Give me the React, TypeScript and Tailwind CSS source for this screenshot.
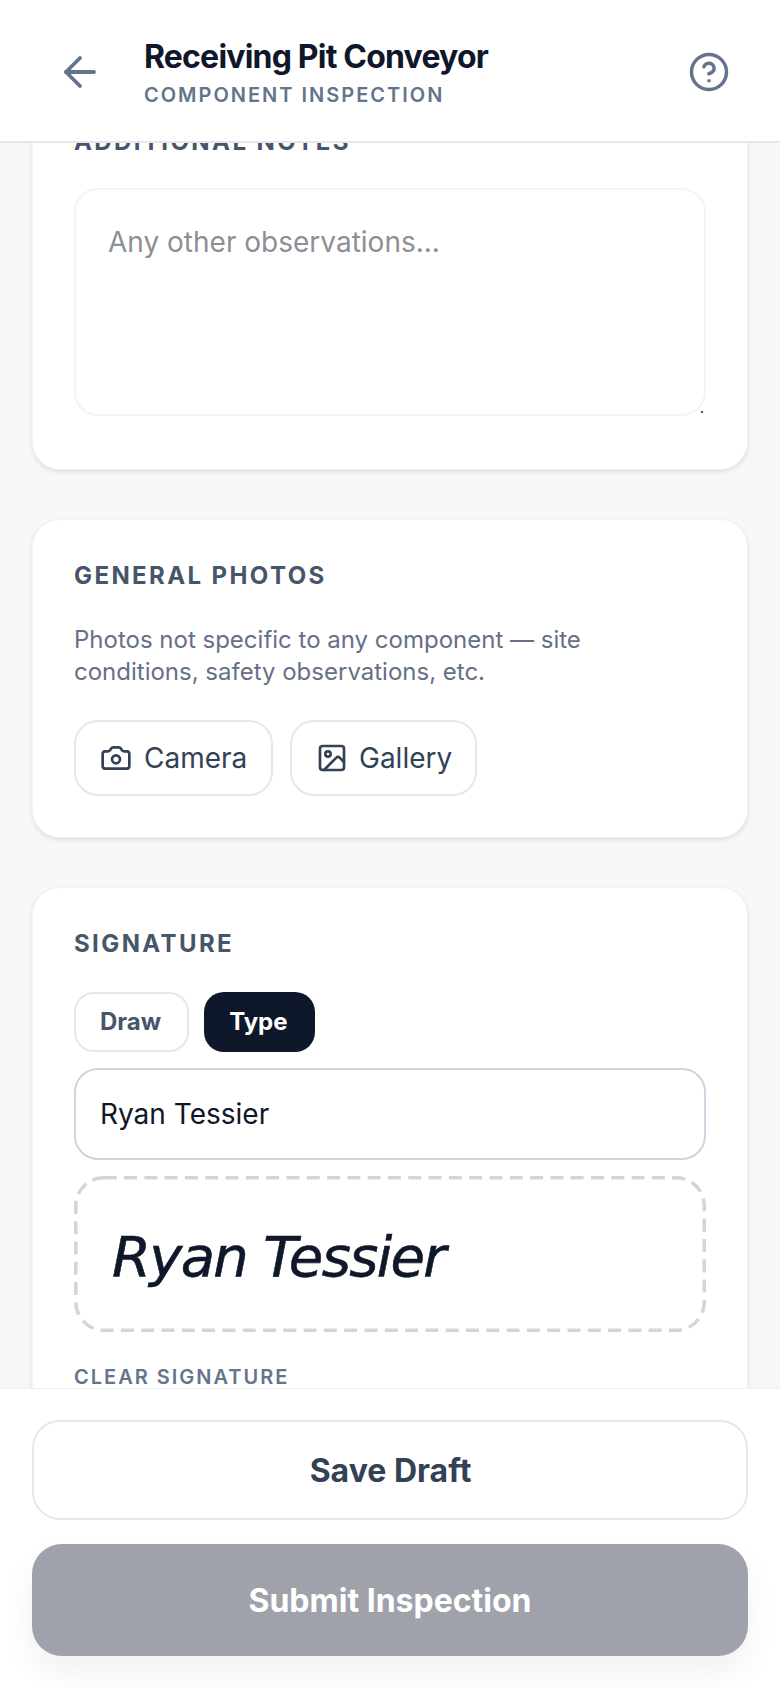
import { ArrowLeft, Camera, CircleHelp, Image } from 'lucide-react';

const cardClass = 'rounded-[28px] border border-[#f1f3f6] bg-white px-[41px] shadow-[0_2px_4px_rgba(0,0,0,0.1)]';
const headingClass = 'text-[24px] leading-[30px] font-bold tracking-[0.1em] text-[#475569]';
const photoButtonClass = 'flex h-[76px] items-center rounded-[24px] border-2 border-[#e5e7ee] pl-[24px] text-[28px] text-[#334155]';

export default function App() {
  return (
    <div className="flex h-[1688px] w-[780px] flex-col overflow-hidden bg-[#f6f7f9] font-['Inter',sans-serif]">
      {/* header */}
      <header className="z-10 flex h-[143px] shrink-0 items-center border-b-2 border-[#e2e8f0] bg-white pt-[2px] pl-[56px] pr-[50px]">
        <ArrowLeft className="h-[48px] w-[48px] text-[#64748b]" strokeWidth={1.9} />
        <div className="ml-[40px] flex-1 pt-[3px]">
          <h1 className="text-[32px] leading-[38px] font-bold tracking-[-0.025em] text-[#0f172a]">Receiving Pit Conveyor</h1>
          <p className="mt-[5px] text-[20px] leading-[28px] font-semibold tracking-[0.1em] text-[#64748b]">COMPONENT INSPECTION</p>
        </div>
        <CircleHelp className="h-[42px] w-[42px] text-[#64748b]" strokeWidth={2} />
      </header>

      {/* scrolled content */}
      <main className="min-h-0 flex-1 overflow-hidden px-[32px]">
        <div className="-mt-[59px] flex flex-col gap-[49px]">
          <section className={`${cardClass} pt-[42px] pb-[53px]`}>
            <h2 className={headingClass}>ADDITIONAL NOTES</h2>
            <div className="relative mt-[31px]">
              <textarea
                readOnly
                placeholder="Any other observations..."
                className="block h-[228px] w-full resize-none rounded-[24px] border-2 border-[#f3f4f6] px-[32px] pt-[34px] pb-[30px] text-[28px] leading-[36px] outline-none placeholder:text-[#8c8f96]"
              />
              <span className="absolute right-[3px] bottom-[3px] h-[2px] w-[2px] bg-[#555]" />
            </div>
          </section>

          <section className={`${cardClass} pt-[41px] pb-[41px]`}>
            <h2 className={headingClass}>GENERAL PHOTOS</h2>
            <p className="mt-[33px] text-[24px] leading-[32px] text-[#667085]">
              Photos not specific to any component — site
              <br />
              conditions, safety observations, etc.
            </p>
            <div className="mt-[32px] flex gap-[17px]">
              <button className={`${photoButtonClass} w-[199px] gap-[12px]`}>
                <Camera className="h-[32px] w-[32px]" strokeWidth={2} />
                Camera
              </button>
              <button className={`${photoButtonClass} w-[187px] gap-[11px]`}>
                <Image className="h-[32px] w-[32px]" strokeWidth={2} />
                Gallery
              </button>
            </div>
          </section>

          <section className={`${cardClass} pt-[41px] pb-[42px]`}>
            <h2 className={headingClass}>SIGNATURE</h2>
            <div className="mt-[33px] flex gap-[15px]">
              <button className="h-[60px] rounded-[20px] border-2 border-[#e5e7ee] pr-[26px] pl-[24px] text-[24px] font-bold text-[#475569]">Draw</button>
              <button className="h-[60px] rounded-[20px] bg-[#0f172a] pr-[27px] pl-[25px] text-[24px] font-bold text-white">Type</button>
            </div>
            <input
              readOnly
              value="Ryan Tessier"
              className="mt-[16px] block h-[92px] w-full rounded-[24px] border-2 border-[#cbd5e1] px-[24px] text-[28px] text-[#0f172a] outline-none"
            />
            <div className="relative mt-[16px] flex h-[156px] items-center pt-[6px] pl-[38px]">
              <svg className="absolute inset-0" width="632" height="156" fill="none">
                <rect x="1.75" y="1.75" width="628.5" height="152.5" rx="28" stroke="#d1d5dc" strokeWidth="3.5" strokeDasharray="13 7.3" />
              </svg>
              <span className="text-[56px] leading-[60px] tracking-[-0.03em] text-[#0f172a] italic font-['DejaVu_Sans',sans-serif] [-webkit-text-stroke:0.6px_#0f172a]">Ryan Tessier</span>
            </div>
            <button className="mt-[35px] block text-[20px] leading-[20px] font-semibold tracking-[0.1em] text-[#64748b]">CLEAR SIGNATURE</button>
          </section>
        </div>
      </main>

      {/* footer actions */}
      <footer className="z-10 flex h-[300px] shrink-0 flex-col gap-[24px] border-t border-[#eef0f3] bg-white px-[32px] pt-[31px]">
        <button className="h-[100px] rounded-[28px] border-2 border-[#e5e7ee] pt-[2px] pl-[1px] text-[32px] font-bold text-[#334155]">Save Draft</button>
        <button className="h-[112px] rounded-[30px] bg-[#9fa2ab] pt-[2px] text-[32px] font-bold text-white shadow-[0_16px_32px_rgba(0,0,0,0.06)]">Submit Inspection</button>
      </footer>
    </div>
  );
}
